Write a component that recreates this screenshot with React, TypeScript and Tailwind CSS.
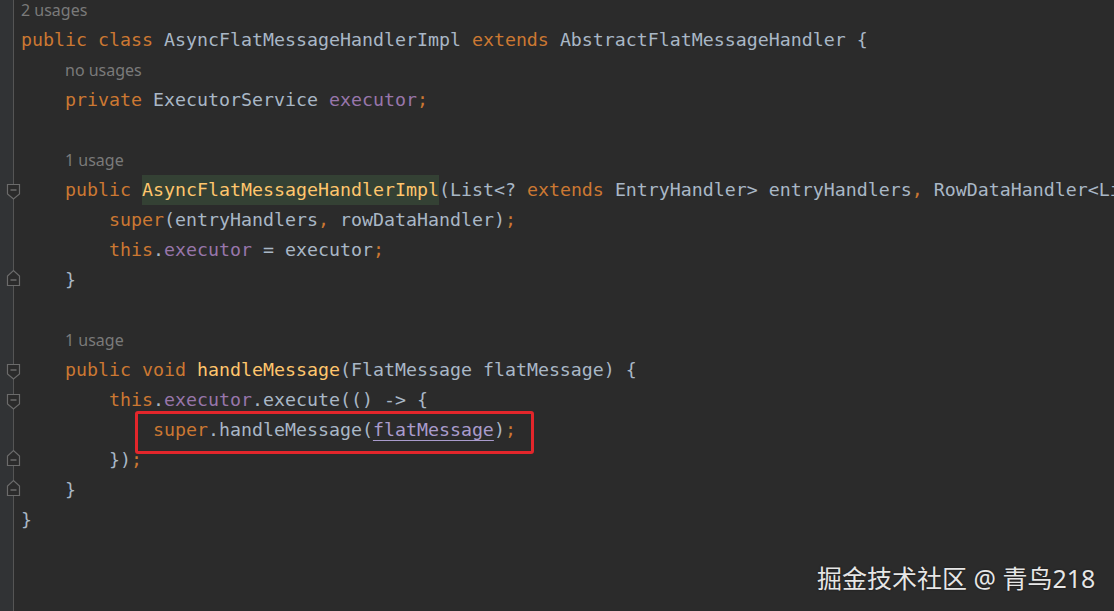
import React from "react";

const K = ({ children }: { children: React.ReactNode }) => (
  <span className="text-[#cc7832]">{children}</span>
);
const F = ({ children }: { children: React.ReactNode }) => (
  <span className="text-[#9876aa]">{children}</span>
);
const Y = ({ children }: { children: React.ReactNode }) => (
  <span className="text-[#ffc66d]">{children}</span>
);

type Fold = "start" | "end" | null;

const FoldIcon = ({ kind }: { kind: Fold }) => {
  if (kind === "start")
    return (
      <svg
        className="absolute left-[6px] top-[8px]"
        width="15"
        height="17"
        viewBox="0 0 15 17"
      >
        <path
          d="M1.5 1.5 H13.5 V11 L7.5 16 L1.5 11 Z"
          fill="#2b2b2b"
          stroke="#6b6b6b"
          strokeWidth="1.2"
        />
        <path d="M4.5 7 H10.5" stroke="#7a7a7a" strokeWidth="1.2" />
      </svg>
    );
  if (kind === "end")
    return (
      <svg
        className="absolute left-[6px] top-[4px]"
        width="15"
        height="18"
        viewBox="0 0 15 18"
      >
        <path
          d="M1.5 16.5 H13.5 V7 L7.5 1.5 L1.5 7 Z"
          fill="#2b2b2b"
          stroke="#6b6b6b"
          strokeWidth="1.2"
        />
        <path d="M4.5 11 H10.5" stroke="#7a7a7a" strokeWidth="1.2" />
      </svg>
    );
  return null;
};

type Row = { fold: Fold; hint?: string; indent?: number; code?: React.ReactNode };

const rows: Row[] = [
  { fold: null, hint: "2 usages", indent: 0 },
  {
    fold: null,
    code: (
      <>
        <K>public class </K>AsyncFlatMessageHandlerImpl <K>extends </K>
        AbstractFlatMessageHandler {"{"}
      </>
    ),
  },
  { fold: null, hint: "no usages", indent: 44 },
  {
    fold: null,
    code: (
      <>
        {"    "}
        <K>private </K>ExecutorService <F>executor</F>
        <K>;</K>
      </>
    ),
  },
  { fold: null },
  { fold: null, hint: "1 usage", indent: 44 },
  {
    fold: "start",
    code: (
      <>
        {"    "}
        <K>public </K>
        <span className="inline-block bg-[#344134] leading-[30px]">
          <Y>AsyncFlatMessageHandlerImpl</Y>
        </span>
        (List{"<"}? <K>extends </K>EntryHandler{">"} entryHandlers<K>, </K>
        RowDataHandler{"<"}Li
      </>
    ),
  },
  {
    fold: null,
    code: (
      <>
        {"        "}
        <K>super</K>(entryHandlers<K>, </K>rowDataHandler)<K>;</K>
      </>
    ),
  },
  {
    fold: null,
    code: (
      <>
        {"        "}
        <K>this</K>.<F>executor</F> = executor<K>;</K>
      </>
    ),
  },
  { fold: "end", code: <>{"    }"}</> },
  { fold: null },
  { fold: null, hint: "1 usage", indent: 44 },
  {
    fold: "start",
    code: (
      <>
        {"    "}
        <K>public void </K>
        <Y>handleMessage</Y>(FlatMessage flatMessage) {"{"}
      </>
    ),
  },
  {
    fold: "start",
    code: (
      <>
        {"        "}
        <K>this</K>.<F>executor</F>.execute(() -{">"} {"{"}
      </>
    ),
  },
  {
    fold: null,
    code: (
      <>
        {"            "}
        <K>super</K>.handleMessage(
        <span className="text-[#a99bcc] underline underline-offset-[4px] decoration-1">
          flatMessage
        </span>
        )<K>;</K>
      </>
    ),
  },
  {
    fold: "end",
    code: (
      <>
        {"        })"}
        <K>;</K>
      </>
    ),
  },
  { fold: "end", code: <>{"    }"}</> },
  { fold: null, code: <>{"}"}</> },
  { fold: null },
  { fold: null },
  { fold: null },
];

export default function App() {
  return (
    <div className="relative h-[611px] w-full overflow-hidden bg-[#2b2b2b]">
      <div className="flex -mt-[5px]">
        <div className="w-[14px] shrink-0 bg-[#313335] border-r border-[#555555]">
          {rows.map((r, i) => (
            <div key={i} className="relative h-[30px]">
              <FoldIcon kind={r.fold} />
            </div>
          ))}
          <div className="h-[40px]" />
        </div>
        <div className="flex-1 min-w-0 pl-[7px]">
          {rows.map((r, i) => (
            <div
              key={i}
              className="h-[30px] flex items-center whitespace-pre overflow-hidden"
            >
              {r.hint ? (
                <span
                  className="text-[#7a7a7a] text-[16px]"
                  style={{ paddingLeft: r.indent }}
                >
                  <span className="font-['Noto_Sans',sans-serif]">{r.hint}</span>
                </span>
              ) : r.code ? (
                <span className="text-[#a9b7c6] text-[18.27px] leading-[30px] font-['DejaVu_Sans_Mono',monospace]">
                  {r.code}
                </span>
              ) : null}
            </div>
          ))}
        </div>
      </div>
      <div className="absolute left-[135px] top-[411px] w-[399px] h-[43px] rounded-[3px] border-[3px] border-[#e3262b]" />
      <div className="absolute left-[817px] top-[560px] text-[25px] leading-[36px] text-[#e6e6e6] font-['Noto_Sans','Noto_Sans_CJK_SC',sans-serif] [text-shadow:0_0_2px_rgba(0,0,0,0.6)] whitespace-nowrap">
        掘金技术社区 @ 青鸟218
      </div>
    </div>
  );
}
